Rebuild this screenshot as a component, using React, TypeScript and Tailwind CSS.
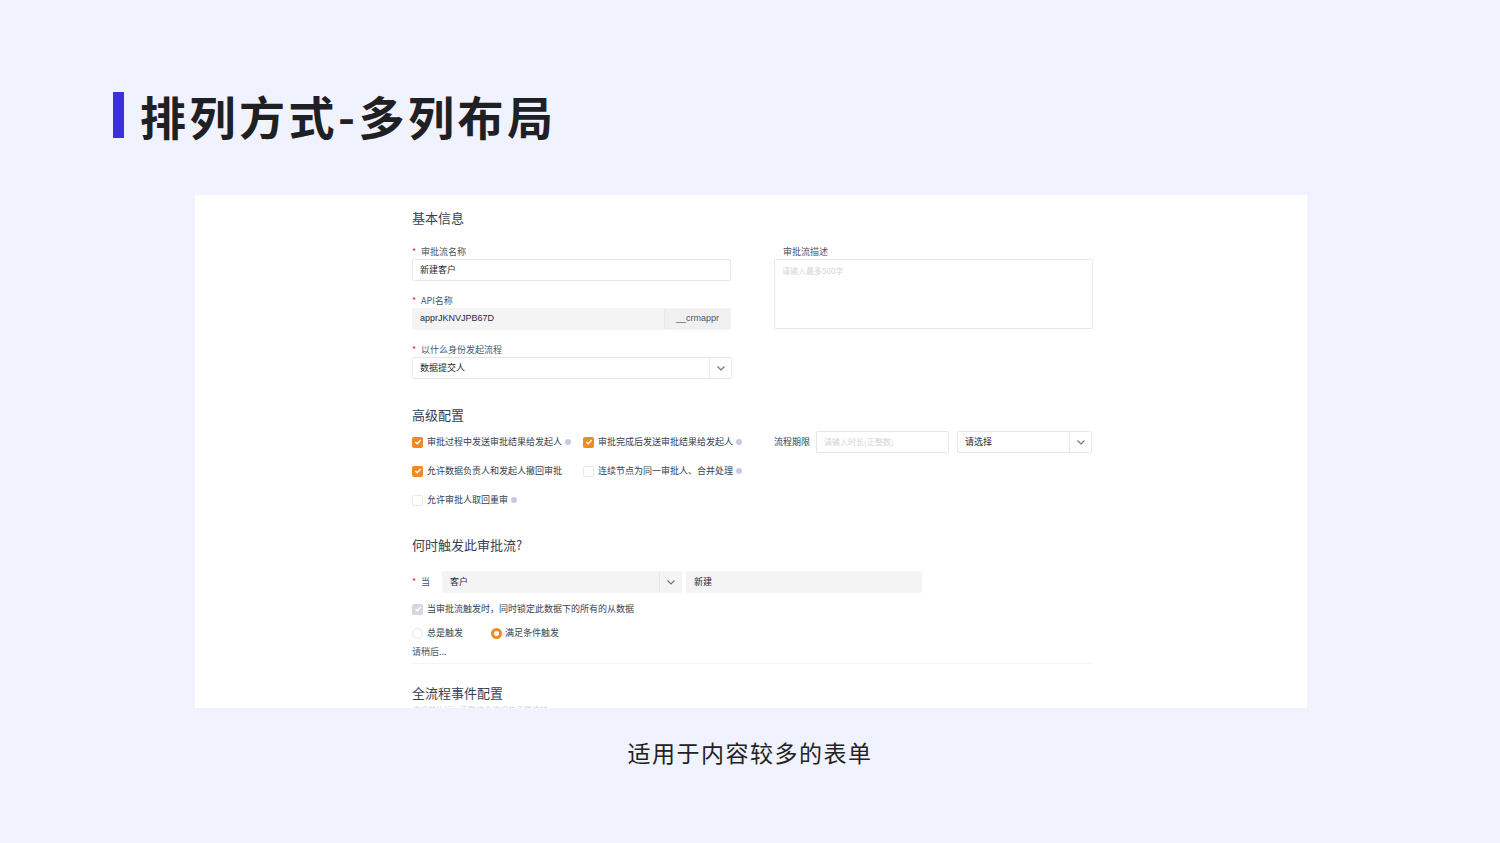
import React from 'react';

const FONT = { fontFamily: '"Noto Sans CJK SC", "Noto Sans", sans-serif' };

function Chevron() {
  return (
    <svg width="10" height="10" viewBox="0 0 10 10" className="text-gray-500">
      <path d="M1.5 3.5 L5 7 L8.5 3.5" fill="none" stroke="currentColor" strokeWidth="1.1" />
    </svg>
  );
}

function Label({ text, required }: { text: string; required?: boolean }) {
  return (
    <div className="h-[16px] flex items-center text-[9px] text-gray-600 leading-none">
      <span className={'w-[9px] text-[#e25]' + (required ? '' : ' invisible')}>*</span>
      {text}
    </div>
  );
}

function Help() {
  return <span className="inline-block w-[6px] h-[6px] rounded-full bg-[#c6cbe0] ml-[3px]" />;
}

function Check({ checked, text, help }: { checked?: boolean; text: string; help?: boolean }) {
  return (
    <div className="flex items-center text-[9px] text-gray-700 h-[14px]">
      {checked ? (
        <span className="w-[11px] h-[11px] rounded-[2px] bg-[#f08a24] flex items-center justify-center mr-[4px]">
          <svg width="8" height="8" viewBox="0 0 8 8"><path d="M1.3 4 L3.2 5.8 L6.7 2" fill="none" stroke="white" strokeWidth="1.3" /></svg>
        </span>
      ) : (
        <span className="w-[11px] h-[11px] rounded-[2px] border border-gray-200 bg-white mr-[4px]" />
      )}
      {text}
      {help && <Help />}
    </div>
  );
}

export default function App() {
  return (
    <div className="w-[1500px] h-[843px] bg-[#f0f2fd] flex flex-col overflow-hidden" style={FONT}>
      <div className="h-[92px]" />
      <div className="flex items-center h-[46px]">
        <div className="ml-[113px] w-[11px] h-[46px] bg-[#3b30d9]" />
        <div className="ml-[16px] text-[46px] font-bold text-[#1f2024] leading-none tracking-[3.5px]">排列方式-多列布局</div>
      </div>
      <div className="ml-[195px] mt-[57px] w-[1112px] h-[513px] bg-white overflow-hidden">
        <div className="ml-[217px] w-[681px]">
          <div className="pt-[16px] h-[40px] text-[13px] text-gray-700 leading-none">基本信息</div>
          <div className="flex gap-[43px] mt-[8px]">
            <div className="w-[319px] flex flex-col">
              <Label text="审批流名称" required />
              <div className="h-[22px] border border-gray-200 rounded-[2px] flex items-center px-[7px] text-[9px] text-gray-800">新建客户</div>
              <div className="h-[11px]" />
              <Label text="API名称" required />
              <div className="h-[22px] flex bg-[#f4f4f5] rounded-[2px] border border-gray-100 text-[9px]">
                <div className="flex-1 flex items-center px-[7px] text-gray-800" style={{ fontFamily: '"Liberation Sans", sans-serif' }}>apprJKNVJPB67D</div>
                <div className="w-[66px] flex items-center justify-center text-gray-600 border-l border-gray-200 bg-[#f0f0f1]" style={{ fontFamily: '"Liberation Sans", sans-serif' }}>__crmappr</div>
              </div>
              <div className="h-[11px]" />
              <Label text="以什么身份发起流程" required />
              <div className="h-[22px] border border-gray-200 rounded-[2px] flex items-center text-[9px] text-gray-800 w-[320px]">
                <div className="flex-1 px-[7px]">数据提交人</div>
                <div className="w-[22px] h-full border-l border-gray-200 flex items-center justify-center"><Chevron /></div>
              </div>
            </div>
            <div className="w-[319px] flex flex-col">
              <Label text="审批流描述" />
              <div className="h-[70px] border border-gray-200 rounded-[2px] px-[7px] pt-[5px] text-[8px] text-gray-300">请输入最多500字</div>
            </div>
          </div>
          <div className="mt-[29px] h-[20px] text-[13px] text-gray-700 leading-none">高级配置</div>
          <div className="flex mt-[7px]">
            <div className="w-[171px] flex flex-col gap-[15px]">
              <Check checked text="审批过程中发送审批结果给发起人" help />
              <Check checked text="允许数据负责人和发起人撤回审批" />
              <Check text="允许审批人取回重审" help />
            </div>
            <div className="w-[191px] flex flex-col gap-[15px]">
              <Check checked text="审批完成后发送审批结果给发起人" help />
              <Check text="连续节点为同一审批人、合并处理" help />
            </div>
            <div className="flex items-start -mt-[4px]">
              <div className="text-[9px] text-gray-700 h-[22px] flex items-center w-[42px]">流程期限</div>
              <div className="w-[133px] h-[22px] border border-gray-200 rounded-[2px] flex items-center px-[7px] text-[8px] text-gray-300">请输入时长(正整数)</div>
              <div className="ml-[8px] w-[135px] h-[22px] border border-gray-200 rounded-[2px] flex items-center text-[9px] text-gray-800">
                <div className="flex-1 px-[7px]">请选择</div>
                <div className="w-[22px] h-full border-l border-gray-200 flex items-center justify-center"><Chevron /></div>
              </div>
            </div>
          </div>
          <div className="mt-[31px] h-[20px] text-[13px] text-gray-700 leading-none">何时触发此审批流?</div>
          <div className="flex items-center mt-[13px] h-[22px] text-[9px]">
            <span className="text-[#e25] w-[9px]">*</span>
            <span className="text-gray-600 w-[21px]">当</span>
            <div className="w-[240px] h-[22px] bg-[#f4f4f5] border border-gray-100 rounded-[2px] flex items-center">
              <div className="flex-1 px-[7px] text-gray-800">客户</div>
              <div className="w-[22px] h-full border-l border-gray-200 flex items-center justify-center"><Chevron /></div>
            </div>
            <div className="ml-[4px] w-[236px] h-[22px] bg-[#f4f4f5] border border-gray-100 rounded-[2px] flex items-center px-[7px] text-gray-800">新建</div>
          </div>
          <div className="mt-[9px] flex items-center text-[9px] text-gray-700 h-[14px]">
            <span className="w-[11px] h-[11px] rounded-[2px] bg-[#d5d8e4] flex items-center justify-center mr-[4px]">
              <svg width="8" height="8" viewBox="0 0 8 8"><path d="M1.3 4 L3.2 5.8 L6.7 2" fill="none" stroke="white" strokeWidth="1.3" /></svg>
            </span>
            当审批流触发时，同时锁定此数据下的所有的从数据
          </div>
          <div className="mt-[10px] flex items-center text-[9px] text-gray-700 h-[14px]">
            <span className="w-[11px] h-[11px] rounded-full border border-gray-200 mr-[4px]" />
            <span className="w-[64px]">总是触发</span>
            <span className="w-[11px] h-[11px] rounded-full border-[3px] border-[#f08a24] mr-[3px]" />
            满足条件触发
          </div>
          <div className="mt-[6px] h-[12px] text-[9px] text-gray-600 leading-[12px]">请稍后...</div>
          <div className="mt-[5px] border-t border-gray-100" />
          <div className="mt-[22px] h-[16px] text-[13px] text-gray-700 leading-none">全流程事件配置</div>
          <div className="mt-[4px] text-[8px] text-gray-300 leading-none">流程前执行，不影响全流程的正常流转</div>
        </div>
      </div>
      <div className="mt-[33px] text-center text-[23px] text-[#222] leading-none tracking-[1.5px]">适用于内容较多的表单</div>
    </div>
  );
}
